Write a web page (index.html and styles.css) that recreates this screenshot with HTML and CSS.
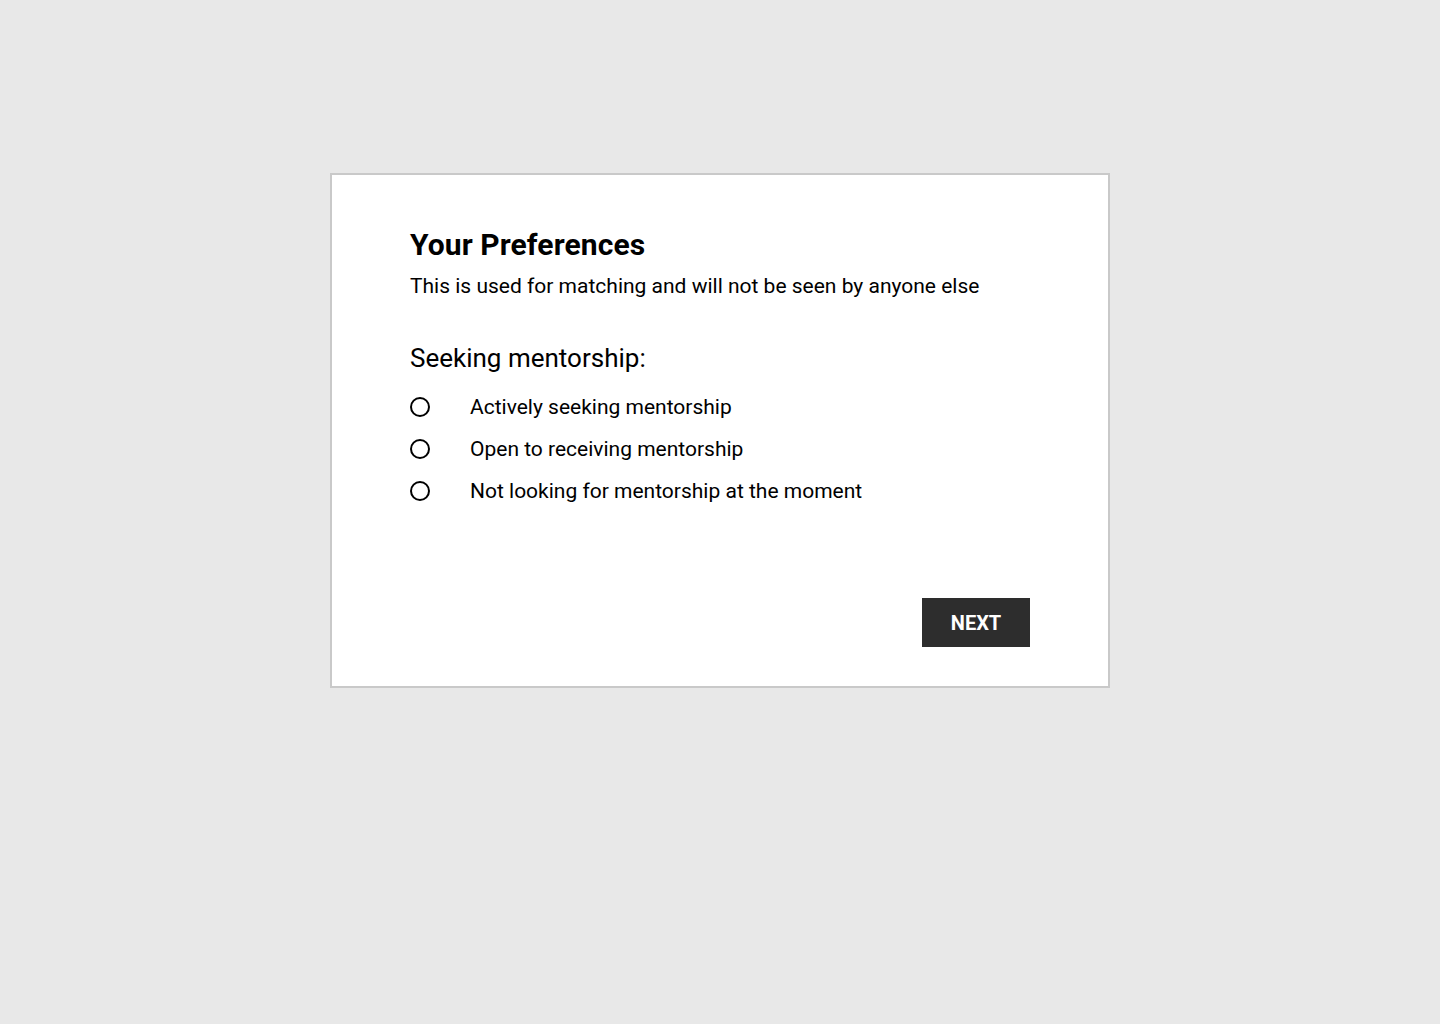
FILE: index.html
```
<!DOCTYPE html>
<html lang="en">
<head>
<meta charset="utf-8">
<title>Your Preferences</title>
<link rel="stylesheet" href="styles.css">
</head>
<body>
<main class="card">
  <h1 class="title">Your Preferences</h1>
  <p class="subtitle">This is used for matching and will not be seen by anyone else</p>
  <h2 class="question">Seeking mentorship:</h2>
  <div class="options">
    <label class="option"><span class="radio"></span><span class="label-text">Actively seeking mentorship</span></label>
    <label class="option"><span class="radio"></span><span class="label-text">Open to receiving mentorship</span></label>
    <label class="option"><span class="radio"></span><span class="label-text">Not looking for mentorship at the moment</span></label>
  </div>
  <div class="actions">
    <button class="next" type="button">NEXT</button>
  </div>
</main>
</body>
</html>
```
FILE: styles.css
```
* { box-sizing: border-box; }
html, body { margin: 0; padding: 0; }
body {
  background: #e8e8e8;
  font-family: Roboto, "Liberation Sans", Arial, sans-serif;
  color: #000;
  padding-top: 173px;
  min-height: 1024px;
}
.card {
  width: 780px;
  height: 515px;
  margin: 0 auto;
  background: #fff;
  border: 2px solid #c9c9c9;
  padding: 52px 78px 39px 78px;
  display: flex;
  flex-direction: column;
}
.title {
  margin: 0 0 11px;
  font-size: 30px;
  line-height: 36px;
  font-weight: 700;
  letter-spacing: 0.1px;
}
.subtitle {
  margin: 0;
  font-size: 21px;
  line-height: 25px;
}
.question {
  margin: 43px 0 12px;
  font-size: 26px;
  line-height: 32px;
  font-weight: 400;
}
.options {
  display: flex;
  flex-direction: column;
}
.option {
  display: flex;
  align-items: center;
  height: 42px;
  font-size: 21px;
  line-height: 25px;
}
.radio {
  width: 20px;
  height: 20px;
  border: 2px solid #000;
  border-radius: 50%;
  flex: none;
  margin-right: 40px;
}
.actions {
  margin-top: auto;
  display: flex;
  justify-content: flex-end;
}
.next {
  height: 49px;
  width: 108px;
  background: #2d2d2d;
  color: #fff;
  border: none;
  border-radius: 0;
  font-family: Roboto, "Liberation Sans", Arial, sans-serif;
  font-size: 20px;
  font-weight: 700;
  padding: 0;
  cursor: pointer;
}
```
